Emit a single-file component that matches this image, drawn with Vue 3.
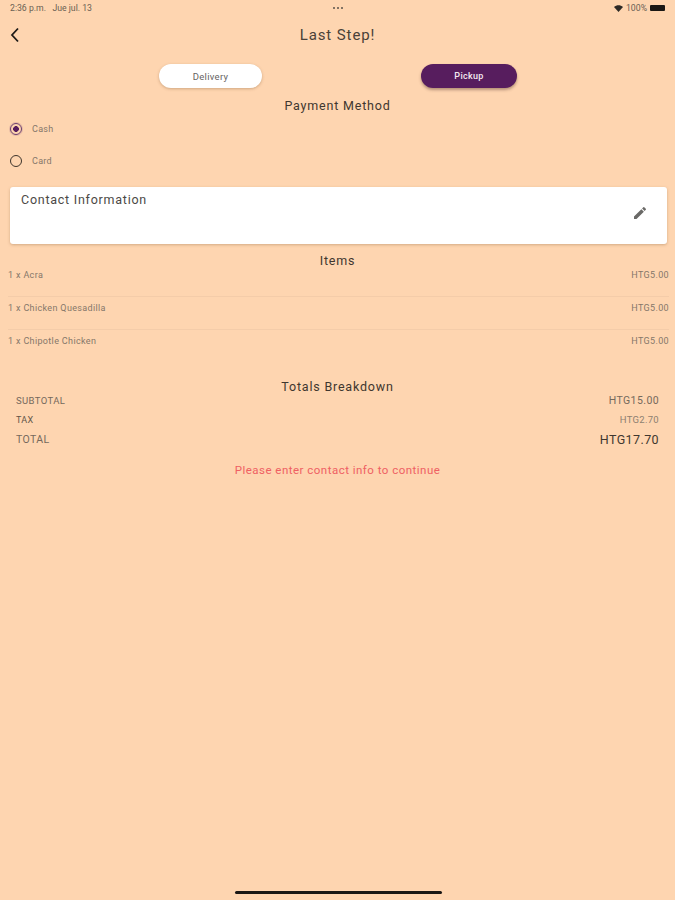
<template>
  <div class="page">
    <div class="status">
      <span>2:36 p.m.&nbsp;&nbsp; Jue jul. 13</span>
      <span class="dots"><i></i><i></i><i></i></span>
      <span class="status-right">
        <svg width="9" height="7" viewBox="0 0 9 7"><path d="M0 2 C2.5 -.4 6.5 -.4 9 2 L4.5 7 Z" fill="#2d2a26"/></svg>
        <span>100%</span>
        <span class="battery"></span>
      </span>
    </div>

    <header class="topbar">
      <svg class="back" width="10" height="16" viewBox="0 0 10 16">
        <path d="M8 1.5 L2 8 L8 14.5" fill="none" stroke="#1d1a17" stroke-width="1.8"/>
      </svg>
      <h1>Last Step!</h1>
    </header>

    <div class="toggle">
      <button class="pill delivery">Delivery</button>
      <button class="pill pickup">Pickup</button>
    </div>

    <h2 class="pay-title">Payment Method</h2>
    <div class="radios">
      <label v-for="m in methods" :key="m" class="radio">
        <span :class="['dot', { on: m === 'Cash' }]"></span>
        <span>{{ m }}</span>
      </label>
    </div>

    <section class="card">
      <span>Contact Information</span>
      <svg class="edit" width="16" height="16" viewBox="0 0 24 24">
        <path d="M3 17.25V21h3.75L17.81 9.94l-3.75-3.75L3 17.25zM20.71 7.04a1 1 0 0 0 0-1.41l-2.34-2.34a1 1 0 0 0-1.41 0l-1.83 1.83 3.75 3.75 1.83-1.83z" fill="#6a6967"/>
      </svg>
    </section>

    <h2 class="items-title">Items</h2>
    <div class="items">
      <div v-for="item in items" :key="item" class="item">
        <span>{{ item }}</span>
        <span>HTG5.00</span>
      </div>
    </div>

    <h2 class="totals-title">Totals Breakdown</h2>
    <div class="totals">
      <div class="row subtotal"><span>SUBTOTAL</span><span class="sub-val">HTG15.00</span></div>
      <div class="row tax"><span>TAX</span><span class="small">HTG2.70</span></div>
      <div class="row total"><span>TOTAL</span><span class="big">HTG17.70</span></div>
    </div>

    <p class="error">Please enter contact info to continue</p>

    <div class="home"></div>
  </div>
</template>

<script setup>
const methods = ['Cash', 'Card']
const items = ['1 x Acra', '1 x Chicken Quesadilla', '1 x Chipotle Chicken']
</script>

<style>
html, body { background: #fed5b0; }
</style>

<style scoped>
.page {
  width: 675px; height: 900px; box-sizing: border-box; overflow: hidden;
  display: flex; flex-direction: column;
  background: #fed5b0; color: #3a332c;
  font-family: Roboto, "Liberation Sans", sans-serif;
}
.status {
  height: 16px; padding: 0 10px; flex: none;
  display: grid; grid-template-columns: 1fr auto 1fr; align-items: center;
  font-size: 8.7px; color: #6a5f53;
}
.dots { display: flex; gap: 2px; }
.dots i { width: 2px; height: 2px; border-radius: 50%; background: #5a524a; }
.status-right { display: flex; justify-content: flex-end; align-items: center; gap: 3px; }
.battery { width: 15px; height: 6px; background: #1a1714; border-radius: 1px; }

.topbar { height: 38px; flex: none; display: flex; align-items: center; justify-content: center; position: relative; }
.back { position: absolute; left: 10px; top: 11px; }
h1 { margin: 0; font-size: 15px; font-weight: 400; letter-spacing: .9px; color: #4a4138; }

.toggle { margin-top: 10px; height: 24px; flex: none; display: flex; padding-left: 159px; }
.pill {
  height: 24px; border: 0; border-radius: 12px; padding: 0;
  font-family: inherit; letter-spacing: .3px;
}
.delivery { width: 103px; font-size: 9.5px; background: #fff; color: #66635f; box-shadow: 0 1px 3px rgba(120, 80, 40, .35); }
.pickup { width: 96px; margin-left: 159px; font-size: 9px; background: #571d5e; color: #f4e8f0; font-weight: 500; box-shadow: 0 2px 3px rgba(90, 60, 50, .45); }

h2 { margin: 0; text-align: center; font-weight: 400; font-size: 12.5px; letter-spacing: .8px; color: #3f372f; line-height: 16px; flex: none; }
.pay-title { margin-top: 10px; }

.radios { margin-top: 7px; padding-left: 10px; display: flex; flex-direction: column; gap: 16px; flex: none; }
.radio { display: flex; align-items: center; gap: 10px; height: 16px; font-size: 9px; letter-spacing: .3px; color: #85776a; }
.dot { width: 12px; height: 12px; box-sizing: border-box; border: 1.5px solid #3f352c; border-radius: 50%; background: transparent; }
.dot.on { border-color: #6b3d6f; background: radial-gradient(circle, #571d5e 0 2.6px, transparent 3.1px); box-shadow: 0 0 0 1px rgba(87, 29, 94, .15); }

.card {
  margin: 18px 8px 0 10px; height: 57px; flex: none; box-sizing: border-box;
  padding: 5px 11px; background: #fff; border-radius: 3px; position: relative;
  font-size: 12.5px; letter-spacing: .75px; color: #4b4946;
  box-shadow: 0 1px 3px rgba(130, 90, 50, .35);
}
.edit { position: absolute; right: 19px; top: 18px; }

.items-title { margin-top: 9px; }
.items { margin-top: -5px; padding: 0 6px 0 8px; flex: none; }
.item {
  height: 33px; box-sizing: border-box; padding-top: 5px;
  display: flex; justify-content: space-between;
  font-size: 9px; letter-spacing: .35px; line-height: 12px; color: #85776a;
  border-bottom: 1px solid #f4cca9;
}
.item:last-child { border-bottom: 0; }

.totals-title { margin-top: 16px; }
.totals { margin-top: -2px; padding: 0 16px; flex: none; }
.row { display: flex; justify-content: space-between; align-items: center; color: #75695c; }
.subtotal { height: 15px; font-size: 9.5px; letter-spacing: .4px; }
.sub-val { font-size: 10.5px; }
.tax { height: 21px; margin-top: 1px; font-size: 9px; letter-spacing: .3px; color: #5f5447; }
.tax .small { color: #8d7f70; font-size: 9.5px; }
.total { height: 19px; font-size: 10.5px; letter-spacing: .4px; }
.total .big { font-size: 12.5px; letter-spacing: .4px; color: #3f372f; }

.error { margin: 14px 0 0; text-align: center; font-size: 11.5px; letter-spacing: .48px; line-height: 14px; color: #ef6063; flex: none; }

.home { width: 207px; height: 3px; margin: auto 0 6px 235px; background: #1a1714; border-radius: 2px; flex: none; }
</style>
